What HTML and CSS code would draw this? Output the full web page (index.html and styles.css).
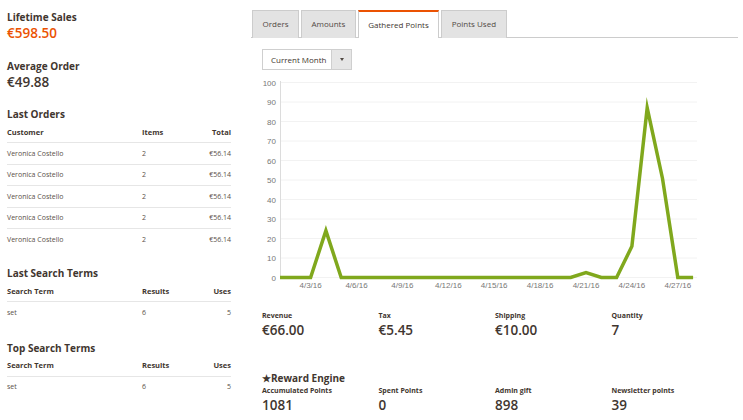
FILE: index.html
```html
<!DOCTYPE html>
<html>
<head>
<meta charset="utf-8">
<link rel="stylesheet" href="styles.css">
</head>
<body>
<div class="page">
  <aside class="left">
    <section class="kpi">
      <h3 class="title">Lifetime Sales</h3>
      <div class="kpi-value orange">€598.50</div>
    </section>
    <section class="kpi kpi-second">
      <h3 class="title">Average Order</h3>
      <div class="kpi-value">€49.88</div>
    </section>

    <h3 class="title sec-orders">Last Orders</h3>
    <div class="grid-table">
      <div class="trow thead"><span>Customer</span><span>Items</span><span class="r">Total</span></div>
      <div class="trow"><span>Veronica Costello</span><span>2</span><span class="r">€56.14</span></div>
      <div class="trow"><span>Veronica Costello</span><span>2</span><span class="r">€56.14</span></div>
      <div class="trow"><span>Veronica Costello</span><span>2</span><span class="r">€56.14</span></div>
      <div class="trow"><span>Veronica Costello</span><span>2</span><span class="r">€56.14</span></div>
      <div class="trow"><span>Veronica Costello</span><span>2</span><span class="r">€56.14</span></div>
    </div>

    <h3 class="title sec-last">Last Search Terms</h3>
    <div class="grid-table">
      <div class="trow thead"><span>Search Term</span><span>Results</span><span class="r">Uses</span></div>
      <div class="trow"><span>set</span><span>6</span><span class="r">5</span></div>
    </div>

    <h3 class="title sec-top">Top Search Terms</h3>
    <div class="grid-table">
      <div class="trow thead"><span>Search Term</span><span>Results</span><span class="r">Uses</span></div>
      <div class="trow"><span>set</span><span>6</span><span class="r">5</span></div>
    </div>
  </aside>

  <main class="right">
    <nav class="tabs">
      <div class="tab">Orders</div>
      <div class="tab">Amounts</div>
      <div class="tab active">Gathered Points</div>
      <div class="tab">Points Used</div>
    </nav>
    <div class="content">
      <div class="select">
        <span class="select-label">Current Month</span>
        <span class="select-btn"><span class="caret"></span></span>
      </div>

      <svg class="chart" width="445" height="220" viewBox="255 75 445 220">
        <g class="grid">
          <line x1="280" y1="82.5" x2="697" y2="82.5"/>
          <line x1="280" y1="102" x2="697" y2="102"/>
          <line x1="280" y1="121.5" x2="697" y2="121.5"/>
          <line x1="280" y1="141" x2="697" y2="141"/>
          <line x1="280" y1="160.5" x2="697" y2="160.5"/>
          <line x1="280" y1="180" x2="697" y2="180"/>
          <line x1="280" y1="199.5" x2="697" y2="199.5"/>
          <line x1="280" y1="219" x2="697" y2="219"/>
          <line x1="280" y1="238.5" x2="697" y2="238.5"/>
          <line x1="280" y1="258" x2="697" y2="258"/>
          <line x1="280" y1="277.5" x2="697" y2="277.5"/>
        </g>
        <line class="axis" x1="280.5" y1="81" x2="280.5" y2="278.5"/>
        <g class="ylab">
          <text x="276" y="85.5">100</text>
          <text x="276" y="105">90</text>
          <text x="276" y="124.5">80</text>
          <text x="276" y="144">70</text>
          <text x="276" y="163.5">60</text>
          <text x="276" y="183">50</text>
          <text x="276" y="202.5">40</text>
          <text x="276" y="222">30</text>
          <text x="276" y="241.5">20</text>
          <text x="276" y="261">10</text>
          <text x="276" y="280.5">0</text>
        </g>
        <g class="xlab">
          <text x="310.6" y="288">4/3/16</text>
          <text x="356.5" y="288">4/6/16</text>
          <text x="402.4" y="288">4/9/16</text>
          <text x="448.3" y="288">4/12/16</text>
          <text x="494.2" y="288">4/15/16</text>
          <text x="540.1" y="288">4/18/16</text>
          <text x="586" y="288">4/21/16</text>
          <text x="631.9" y="288">4/24/16</text>
          <text x="677.8" y="288">4/27/16</text>
        </g>
        <polyline class="series" points="280,277.5 295.3,277.5 310.6,277.5 325.9,230.7 341.2,277.5 570.7,277.5 586,272.6 601.3,277.5 616.6,277.5 631.9,246.3 647.2,107.9 662.5,178.5 677.8,277.5 693.1,277.5"/>
      </svg>

      <div class="stats">
        <div class="stat"><div class="stat-label">Revenue</div><div class="stat-value orange">€66.00</div></div>
        <div class="stat"><div class="stat-label">Tax</div><div class="stat-value">€5.45</div></div>
        <div class="stat"><div class="stat-label">Shipping</div><div class="stat-value">€10.00</div></div>
        <div class="stat"><div class="stat-label">Quantity</div><div class="stat-value">7</div></div>
      </div>

      <h3 class="title reward-title">★Reward Engine</h3>
      <div class="stats reward">
        <div class="stat"><div class="stat-label">Accumulated Points</div><div class="stat-value">1081</div></div>
        <div class="stat"><div class="stat-label">Spent Points</div><div class="stat-value">0</div></div>
        <div class="stat"><div class="stat-label">Admin gift</div><div class="stat-value">898</div></div>
        <div class="stat"><div class="stat-label">Newsletter points</div><div class="stat-value">39</div></div>
      </div>
    </div>
  </main>
</div>
</body>
</html>
```

FILE: styles.css
```css
html, body {
  margin: 0;
  padding: 0;
  background: #ffffff;
}
body {
  font-family: "Open Sans", "Noto Sans", sans-serif;
  color: #41362f;
  width: 743px;
  height: 420px;
  overflow: hidden;
}
.page {
  display: flex;
  gap: 20px;
  padding: 10px 5px 0 7px;
}
.left {
  width: 224px;
  flex: none;
}
.title {
  margin: 0;
  font-size: 10px;
  line-height: 14px;
  font-weight: 700;
  color: #41362f;
}
.kpi-value {
  font-size: 13.5px;
  line-height: 18px;
  font-weight: 600;
  color: #41362f;
}
.orange {
  color: #eb5202;
}
.kpi-second {
  margin-top: 17px;
}
.sec-orders {
  margin-top: 16px;
}
.sec-last {
  margin-top: 16.5px;
}
.sec-top {
  margin-top: 18px;
}
.trow {
  display: grid;
  grid-template-columns: 135px 1fr auto;
  align-items: center;
  height: 21.5px;
  box-sizing: border-box;
  border-top: 1px solid #e6e6e6;
  font-size: 7px;
  color: #5a5048;
}
.trow.thead {
  height: 21px;
  border-top: 0;
  font-weight: 700;
  font-size: 7.5px;
  color: #41362f;
}
.r {
  text-align: right;
}
.right {
  width: 487px;
  flex: none;
}
.tabs {
  display: flex;
  gap: 2px;
  border-bottom: 1px solid #cccccc;
  height: 27px;
  padding-left: 1px;
}
.tab {
  box-sizing: border-box;
  height: 28px;
  padding: 0 9.5px;
  background: #e3e3e3;
  border: 1px solid #cccccc;
  border-bottom: 0;
  font-size: 8px;
  line-height: 26px;
  color: #514943;
  margin-bottom: -1px;
}
.tab.active {
  background: #ffffff;
  border-top: 2px solid #eb5202;
  line-height: 25px;
  color: #41362f;
}
.content {
  padding-left: 11px;
}
.select {
  display: flex;
  width: 90px;
  height: 21px;
  box-sizing: border-box;
  border: 1px solid #cfcfcf;
  margin-top: 11px;
}
.select-label {
  flex: 1;
  font-size: 8px;
  line-height: 19px;
  padding-left: 8px;
  color: #41362f;
}
.select-btn {
  width: 19px;
  border-left: 1px solid #cfcfcf;
  background: #e6e6e6;
  display: flex;
  align-items: center;
  justify-content: center;
}
.caret {
  width: 0;
  height: 0;
  border-left: 2px solid transparent;
  border-right: 2px solid transparent;
  border-top: 3px solid #514943;
}
.chart {
  display: block;
  margin-top: 5px;
  margin-left: -7px;
}
.grid line {
  stroke: #f2f2f2;
  stroke-width: 1;
}
.axis {
  stroke: #dcdcdc;
  stroke-width: 1;
}
.ylab text {
  font-family: "Liberation Sans", Arial, sans-serif;
  font-size: 8px;
  fill: #777777;
  text-anchor: end;
}
.xlab text {
  font-family: "Liberation Sans", Arial, sans-serif;
  font-size: 8px;
  fill: #777777;
  text-anchor: middle;
}
.series {
  fill: none;
  stroke: #80a81d;
  stroke-width: 3.5;
  stroke-linejoin: miter;
  stroke-miterlimit: 10;
}
.stats {
  display: grid;
  grid-template-columns: repeat(4, 116.5px);
  margin-top: 16px;
}
.stat-label {
  font-size: 7px;
  line-height: 10px;
  font-weight: 700;
  color: #41362f;
}
.stat-value {
  font-size: 13.5px;
  line-height: 18px;
  font-weight: 600;
  color: #41362f;
}
.reward-title {
  margin-top: 32px;
}
.stats.reward {
  margin-top: 1px;
}
```
